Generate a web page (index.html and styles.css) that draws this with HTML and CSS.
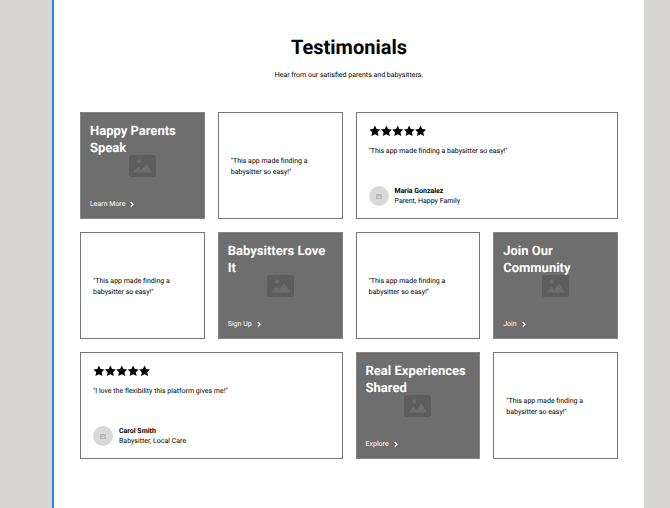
FILE: index.html
```
<!DOCTYPE html>
<html lang="en">
<head>
<meta charset="utf-8">
<title>Testimonials</title>
<link rel="stylesheet" href="styles.css">
</head>
<body>
<svg class="defs" aria-hidden="true">
  <symbol id="picture" viewBox="0 0 27 22"><path fill-rule="evenodd" d="M2.500 0h22A2.500 2.500 0 0 1 27 2.500v17a2.500 2.500 0 0 1-2.500 2.500h-22A2.500 2.500 0 0 1 0 19.500v-17A2.500 2.500 0 0 1 2.500 0zM10.200 4.200a2.100 2.100 0 1 0 0 4.200 2.100 2.100 0 0 0 0-4.200zM4 17.500h19.200L17.200 8.500l-5.200 6.500-2.600-3.200z"/></symbol>
  <symbol id="stars" viewBox="0 0 115 24">
    <g id="star"><path d="M12 0.800l3.400 7.300 7.600 .9-5.500 5.400 1.600 7.900L12 18.400l-7.100 3.900 1.600-7.900L1 9l7.600-.9z"/></g>
    <use href="#star" x="23"/><use href="#star" x="46"/><use href="#star" x="69"/><use href="#star" x="92"/>
  </symbol>
  <symbol id="chevron" viewBox="0 0 6 8"><path d="M1.800 1L4 3.300 1.800 5.600" fill="none" stroke="currentColor" stroke-width="1.200"/></symbol>
</svg>
<main class="page">
  <header class="intro">
    <h1>Testimonials</h1>
    <p>Hear from our satisfied parents and babysitters.</p>
  </header>
  <section class="grid">
    <article class="card promo">
      <svg class="picture"><use href="#picture"/></svg>
      <h2>Happy Parents Speak</h2>
      <a href="#">Learn More <svg class="chevron"><use href="#chevron"/></svg></a>
    </article>
    <article class="card quote"><p>"This app made finding a babysitter so easy!"</p></article>
    <article class="card review">
      <svg class="stars" role="img" aria-label="5 stars"><use href="#stars"/></svg>
      <p>"This app made finding a babysitter so easy!"</p>
      <footer class="author">
        <span class="avatar"><svg><use href="#picture"/></svg></span>
        <div><strong>Maria Gonzalez</strong><span>Parent, Happy Family</span></div>
      </footer>
    </article>
    <article class="card quote"><p>"This app made finding a babysitter so easy!"</p></article>
    <article class="card promo">
      <svg class="picture"><use href="#picture"/></svg>
      <h2>Babysitters Love It</h2>
      <a href="#">Sign Up <svg class="chevron"><use href="#chevron"/></svg></a>
    </article>
    <article class="card quote"><p>"This app made finding a babysitter so easy!"</p></article>
    <article class="card promo">
      <svg class="picture"><use href="#picture"/></svg>
      <h2>Join Our Community</h2>
      <a href="#">Join <svg class="chevron"><use href="#chevron"/></svg></a>
    </article>
    <article class="card review">
      <svg class="stars" role="img" aria-label="5 stars"><use href="#stars"/></svg>
      <p>"I love the flexibility this platform gives me!"</p>
      <footer class="author">
        <span class="avatar"><svg><use href="#picture"/></svg></span>
        <div><strong>Carol Smith</strong><span>Babysitter, Local Care</span></div>
      </footer>
    </article>
    <article class="card promo">
      <svg class="picture"><use href="#picture"/></svg>
      <h2>Real Experiences Shared</h2>
      <a href="#">Explore <svg class="chevron"><use href="#chevron"/></svg></a>
    </article>
    <article class="card quote"><p>"This app made finding a babysitter so easy!"</p></article>
  </section>
</main>
</body>
</html>
```
FILE: styles.css
```
* {
  box-sizing: border-box;
}

body {
  margin: 0;
  padding: 0 26px 0 52px;
  background: #d7d6d2;
  color: #000;
  font: 7px/11px Roboto, sans-serif;
  text-rendering: geometricPrecision;
}

h1, h2, p {
  margin: 0;
}

.defs {
  display: none;
}

.page {
  min-height: 100vh;
  padding: 35px 26px 48px;
  border-left: 2px solid #168eea;
  background: #fff;
}

.intro {
  margin-bottom: 31px;
  text-align: center;
}

h1 {
  margin-bottom: 11px;
  font-size: 20px;
  line-height: 24px;
  font-weight: 700;
}

.grid {
  display: grid;
  grid-template-columns: repeat(4, minmax(0, 1fr));
  grid-auto-rows: minmax(107px, auto);
  gap: 13px;
}

.card {
  display: flex;
  flex-direction: column;
  padding: 12px;
  border: 1px solid #777;
}

.quote {
  justify-content: center;
  padding-top: 14px;
}

.review {
  grid-column: span 2;
}

.promo {
  position: relative;
  justify-content: space-between;
  align-items: flex-start;
  padding: 10px 9px 8px;
  border-color: #858585;
  background: #6e6e6e;
  color: #fff;
}

.promo h2 {
  position: relative;
  font-size: 13px;
  line-height: 17px;
  font-weight: 700;
}

.promo a {
  display: flex;
  align-items: center;
  gap: 4px;
  color: inherit;
  text-decoration: none;
}

.picture {
  position: absolute;
  inset: 0;
  width: 27px;
  height: 22px;
  margin: auto;
  fill: #5d5d5d;
}

.chevron {
  width: 6px;
  height: 8px;
}

.stars {
  width: 57px;
  height: 12px;
  margin-bottom: 9px;
}

.author {
  display: flex;
  align-items: center;
  gap: 6px;
  margin-top: auto;
  line-height: 10px;
}

.author strong,
.author div span {
  display: block;
}

.avatar {
  display: grid;
  place-items: center;
  width: 20px;
  height: 20px;
  border-radius: 50%;
  background: #d9d9d9;
}

.avatar svg {
  width: 6px;
  height: 5px;
  fill: #b8b8b8;
}
```
